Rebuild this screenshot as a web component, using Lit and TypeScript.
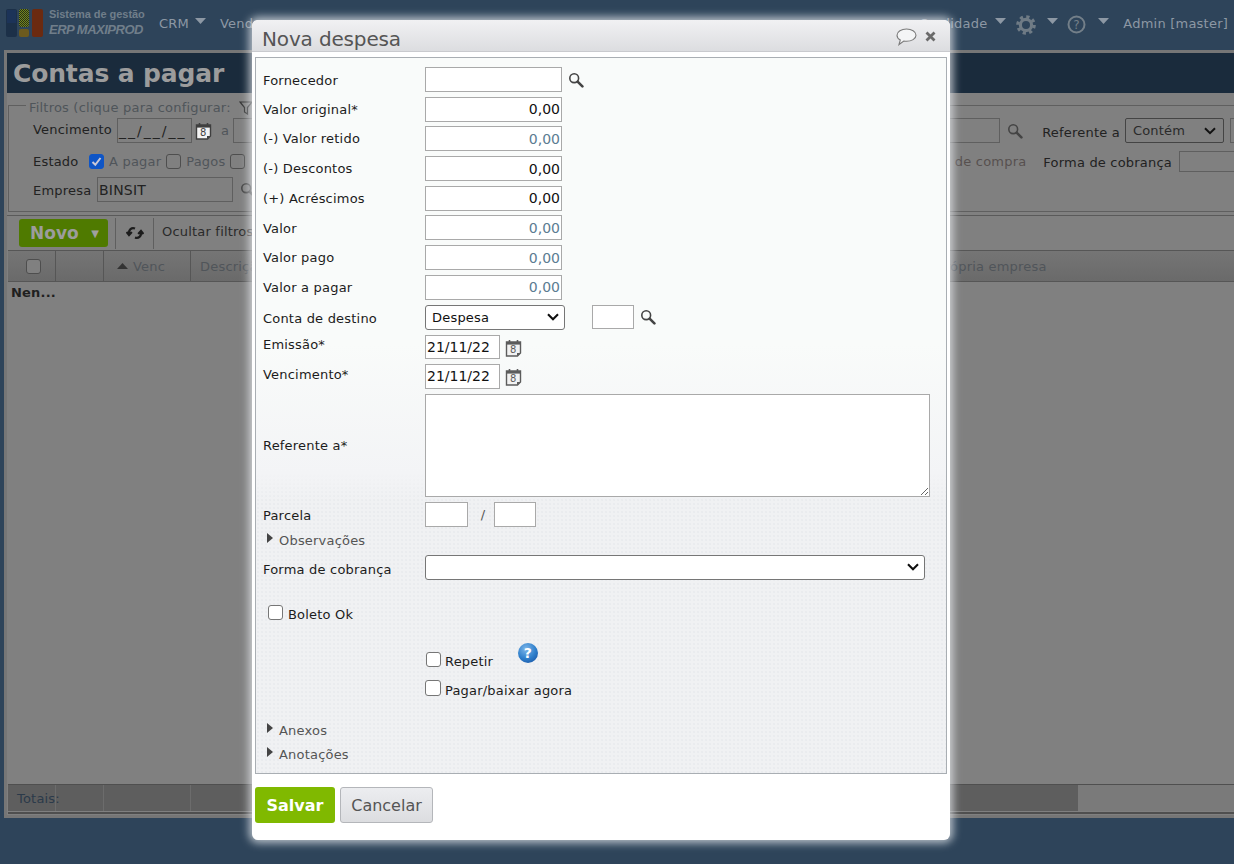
import { LitElement, html, css } from "lit";
import { customElement } from "lit/decorators.js";

const mag = html`<svg class="mag" viewBox="0 0 16 16" width="16" height="16"><circle cx="6.2" cy="6.2" r="4.4" fill="none" stroke="currentColor" stroke-width="1.6"/><path d="M9.6 9.6L14.4 14.4" stroke="currentColor" stroke-width="2.6" stroke-linecap="round"/></svg>`;
const cal = html`<svg class="cal" viewBox="0 0 17 18" width="17" height="18"><path d="M1.5 3h14v11l-3 3h-11z" fill="#f2f2f2" stroke="currentColor" stroke-width="1.4"/><path d="M1.5 3h14v2.6h-14z" fill="currentColor"/><path d="M4.5 1v3M12.5 1v3" stroke="currentColor" stroke-width="1.6"/><path d="M12 17v-3h3.5z" fill="currentColor"/><text x="8.3" y="14.4" text-anchor="middle" font-family="DejaVu Sans" font-size="10" fill="currentColor">8</text></svg>`;
const caret = html`<svg class="caret" viewBox="0 0 11 6" width="11" height="6"><path d="M0 0H11L5.500 6z" fill="currentColor"/></svg>`;
const side = html`<svg class="side" viewBox="0 0 6 10" width="6" height="10"><path d="M0 0L6 5L0 10z" fill="#444"/></svg>`;

@customElement("app-root")
export class AppRoot extends LitElement {
  static styles = css`
    :host { display: block; position: relative; width: 1234px; height: 864px; overflow: hidden; background: #2e445a; font-family: "DejaVu Sans", sans-serif; font-size: 13px; letter-spacing: .2px; color: #222; }
    * { box-sizing: border-box; }
    .top { height: 50px; display: flex; align-items: center; color: #8d98a4; white-space: nowrap; }
    .logo { margin: -4px 0 0 6px; flex: none; }
    .brand { margin-left: 5px; width: 110px; display: flex; flex-direction: column; color: #707e8a; margin-top: -6px; font-family: "Liberation Sans", sans-serif; letter-spacing: 0; }
    .brand b { font-size: 11px; line-height: 14px; font-weight: 700; letter-spacing: -.05px; }
    .brand i { font-size: 13px; line-height: 15px; font-weight: 700; font-style: italic; margin-top: 1px; letter-spacing: -.5px; }
    .menu { display: flex; align-items: center; margin-top: -4px; }
    .caret { color: #8d98a4; display: block; }
    .m-crm { width: 61px; gap: 6px; }
    .m-crm .caret { margin-bottom: 4px; }
    .right { margin-left: auto; display: flex; align-items: center; margin-top: -4px; padding-right: 6px; letter-spacing: .22px; }
    .right span.r { display: flex; margin-bottom: 4px; }
    .right svg.ico { margin-top: 3px; display: block; }
    .right .r1 { margin: 0 10px 0 8px; }
    .right .r2 { margin: 0 9px 0 11px; }
    .right .r3 { margin: 0 14px 0 12px; }
    .page { height: 768px; margin-left: 4px; border: solid #767676; border-width: 3px 0 3px 3px; background: #808080; display: flex; flex-direction: column; overflow: hidden; }
    .title { height: 40px; flex: none; background: #1a2b3c; color: #9c9c9c; font-size: 25px; font-weight: 700; line-height: 42px; padding-left: 6px; letter-spacing: -.15px; }
    fieldset { flex: none; margin: 2px -2px 0 1px; padding: 0; height: 117px; border: 1px solid #5f5f5f; min-width: 0; display: flex; flex-direction: column; }
    legend { margin-left: 17px; padding: 6px 3px 0; color: #4f555a; line-height: 14px; height: 20px; display: flex; align-items: center; gap: 8px; }
    .f { display: flex; align-items: center; padding-left: 24px; white-space: nowrap; }
    .f > * { flex: none; }
    .f > .rt { flex: 1; min-width: 0; }
    .f1 { height: 25px; margin-top: 3px; }
    .f2 { height: 22px; margin-top: 7px; }
    .f3 { height: 25px; margin-top: 5px; }
    .fi { height: 25px; border: 1px solid #5f5f5f; background: #808080; padding: 0 1px; font: 14px "DejaVu Sans", sans-serif; color: #222; display: flex; align-items: center; flex: none; }
    .l84 { width: 84px; margin-top: -3px; }
    .l56 { width: 56px; }
    .l64 { width: 64px; margin-top: 2px; }
    .w75 { width: 75px; letter-spacing: 2px; }
    .w767 { width: 767px; }
    .w136 { width: 136px; }
    .w10 { width: 10px; margin-left: 6px; }
    .w58 { width: 56px; height: 21px; margin-left: 7px; }
    .bgcal { margin-left: 3px; color: #3f3f3f; display: flex; }
    .bga { margin: 0 4px 0 9px; }
    .bgmag { margin-left: 7px; color: #333; display: flex; }
    .refa { margin-left: 19px; margin-top: 3px; }
    .muted { color: #50555a; }
    .compra { color: #57504f; }
    .forma { margin-left: 17px; margin-top: 2px; }
    .gap5 { margin: 0 5px; }
    .cb { width: 15px; height: 15px; border: 1px solid #4e4e4e; border-radius: 3px; background: #808080; flex: none; display: block; }
    .cb.on { background: #0e55c6; border-color: #0e55c6; }
    .cb.on svg { display: block; }
    .rt { display: flex; align-items: center; justify-content: flex-end; }
    .sel { width: 99px; height: 25px; border: 1px solid #444; border-radius: 2px; padding: 0 7px; display: flex; align-items: center; justify-content: space-between; margin-left: 5px; color: #2a2a2a; }
    .bar { height: 35px; flex: none; margin-top: 3px; border-top: 1px solid #5a5a5a; display: flex; align-items: center; white-space: nowrap; }
    .novo { margin-left: 12px; width: 89px; height: 28px; border-radius: 3px; background: #4f7a00; color: #9c9c9c; font-size: 17px; font-weight: 700; letter-spacing: 0; display: flex; align-items: center; justify-content: space-between; padding: 0 9px 0 11px; }
    .novo span { font-size: 10px; color: #a0a0a0; }
    .sep { width: 1px; height: 31px; background: #5f5f5f; flex: none; }
    .sep1 { margin-left: 7px; }
    .ref { margin: 0 9px 0 10px; flex: none; display: block; }
    .hide { margin: 0 0 3px 8px; color: #2a2a2a; }
    .th { height: 32px; flex: none; margin-left: 1px; border: solid #565656; border-width: 1px 0; background: linear-gradient(#757575, #6a6a6a); display: flex; color: #333; white-space: nowrap; }
    .c { border-right: 1px solid #565656; display: flex; align-items: center; flex: none; }
    .c1 { width: 48px; justify-content: center; padding-left: 3px; }
    .c2 { width: 48px; }
    .c3 { width: 87px; padding-left: 13px; gap: 5px; }
    .c4 { width: 746px; padding-left: 9px; border-right: 0; }
    .c5 { border: 0; }
    .c3 svg { color: #333; }
    .tb { flex: 1; margin-left: 1px; padding: 2px 0 0 3px; font-weight: 700; color: #1f1f1f; line-height: 17px; }
    .foot { height: 27px; flex: none; margin-left: 1px; border-top: 1px solid #4f4f4f; background: #7a7a7a; display: flex; }
    .fc { background: #5e5e5e; border-right: 1px solid #6c6c6c; flex: none; }
    .fc1 { width: 48px; padding: 6px 0 0 9px; color: #2b3a4a; line-height: 16px; white-space: nowrap; position: relative; z-index: 1; }
    .fc1b { width: 48px; }
    .fc2 { width: 87px; }
    .fc3 { width: 887px; border-right: 0; }
    .under { height: 3px; margin-left: 1px; border-top: 2px solid #4f4f4f; margin-top: 1px; flex: none; }

    .dlg { position: absolute; left: 252px; top: 20px; width: 698px; height: 820px; background: #fff; border-radius: 6px; box-shadow: 0 0 9px 3px rgba(232,236,240,.75); display: flex; flex-direction: column; }
    .dh { height: 32px; flex: none; border-radius: 6px 6px 0 0; background: linear-gradient(#f1f1f3, #dcdde0); border-bottom: 1px solid #c9cace; display: flex; align-items: center; padding: 7px 14px 0 10px; color: #555; font-size: 20px; letter-spacing: -.15px; }
    .dh .t { flex: 1; }
    .dh svg { display: block; margin-top: -5px; }
    .dh .x { margin-left: 8px; }
    .box { flex: none; width: 692px; height: 717px; margin: 5px 0 0 3px; border: 1px solid #a9aeb3; padding-top: 9px; display: flex; flex-direction: column; color: #1c1c1c;
      background: linear-gradient(#f9fbfa 0, #f9fbfa 40%, #f3f4f6 58%, rgba(240,241,243,0) 62%), radial-gradient(#e8eaed .6px, transparent 1px) 0 0/4px 4px, #f0f1f3; }
    .row { display: flex; align-items: center; padding-left: 7px; height: 25px; flex: none; }
    .row label { width: 162px; flex: none; white-space: nowrap; margin-top: 2px; }
    .row.v label { margin-top: 1px; }
    .row.v label.up { margin-top: 0; }
    input.i, textarea, select { font-family: "DejaVu Sans", sans-serif; color: #111; background-color: #fff; }
    input.i { height: 25px; border: 1px solid #a9a9a9; padding: 0 1px; font-size: 14px; outline: none; border-radius: 0; display: block; }
    .w138 { width: 137px; }
    .num { text-align: right; }
    .ro { color: #5b7c92 !important; }
    .v { margin-bottom: 4.7px; }
    .mag { color: #444; flex: none; display: block; }
    .row .mag { margin-left: 6px; }
    select { height: 25px; border: 1px solid #767676; border-radius: 3px; font-size: 13px; letter-spacing: .2px; padding: 0 6px; display: block; flex: none; appearance: none; -webkit-appearance: none;
      background-image: url("data:image/svg+xml,%3Csvg xmlns='http://www.w3.org/2000/svg' width='12' height='8'%3E%3Cpath d='M1 1.200L6 6.200L11 1.200' fill='none' stroke='%23111' stroke-width='2.100'/%3E%3C/svg%3E");
      background-repeat: no-repeat; background-position: right 5px center; }
    .sdest { width: 140px; }
    .row .w42 { width: 42px; margin-left: 27px; height: 24px; }
    .r-em { margin-top: 5px; height: 24px; align-items: flex-start; }
    .r-ve { margin-top: 5px; height: 25px; align-items: flex-start; }
    .r-em label { line-height: 16px; margin-top: 2px; }
    .r-ve label { line-height: 16px; margin-top: 3px; }
    .date { width: 75px; }
    .h24 { height: 24px !important; }
    .row .cal { margin-left: 5px; color: #5c5c5c; flex: none; margin-top: 4px; }
    .r-ta { margin-top: 5px; height: 103px; }
    .row.r-ta label { margin-top: 0; }
    textarea { width: 505px; height: 103px; border: 1px solid #a9a9a9; display: block; outline: none; flex: none; }
    .r-pa { margin-top: 5px; }
    .w43 { width: 43px; }
    .r-pa span { width: 26px; text-align: center; padding-left: 4px; color: #555; flex: none; }
    .r-pa .w42b { width: 42px; height: 25px; }
    .fold { height: 16px; flex: none; display: flex; align-items: center; padding-left: 11px; color: #555; gap: 6px; }
    .fold span { margin-top: 2px; }
    .side { display: block; margin-top: -3px; }
    .r-ob { margin-top: 5px; }
    .r-fo { margin-top: 7px; }
    .row.r-fo label { margin-top: 4px; }
    .sfo { width: 500px; }
    .ck { appearance: none; -webkit-appearance: none; margin: 0; width: 15px; height: 15px; border: 1px solid #767676; border-radius: 3px; background: #fff; flex: none; display: block; }
    .r-bo { height: 16px; flex: none; margin-top: 25px; padding-left: 12px; display: flex; align-items: center; gap: 5px; }
    .r-bo span { margin-top: 4px; }
    .r-re { height: 25px; flex: none; margin-top: 22px; padding-left: 170px; display: flex; align-items: flex-end; }
    .r-re .ck { margin-bottom: 1px; }
    .r-re span { margin-left: 4px; width: 73px; line-height: 16px; margin-bottom: -2px; }
    .r-re svg { align-self: flex-start; display: block; }
    .r-pg { height: 16px; flex: none; margin-top: 12px; padding-left: 169px; display: flex; align-items: center; gap: 4px; }
    .r-pg span { margin-top: 5px; }
    .r-pg .ck { width: 16px; height: 16px; }
    .r-an { margin-top: 26px; }
    .r-at { margin-top: 8px; }
    .btns { display: flex; gap: 5px; margin: 13px 0 0 3px; letter-spacing: 0; }
    .btns div { height: 36px; border-radius: 3px; display: flex; align-items: center; justify-content: center; font-size: 16px; }
    .sv { width: 80px; background: #80b900; color: #fff; font-weight: 700; }
    .cn { width: 93px; background: linear-gradient(#ecedf0, #dcdde0); border: 1px solid #b4b6ba; color: #555; }
  `;

  render() {
    return html`
      <div class="top">
        <svg class="logo" width="38" height="28" viewBox="0 0 38 28">
          <defs>
            <pattern id="pa" width="2" height="2" patternUnits="userSpaceOnUse"><rect width="1" height="1" fill="#76861c"/><rect x="1" y="1" width="1" height="1" fill="#76861c"/><rect x="1" width="1" height="1" fill="#26301a"/><rect y="1" width="1" height="1" fill="#26301a"/></pattern>
          </defs>
          <rect x="0" y="0" width="11" height="28" rx="2" fill="#1c3048"/><rect x="1" y="1" width="9" height="13" fill="#1c3358"/>
          <rect x="13" y="0" width="10" height="18" rx="2" fill="url(#pa)"/>
          <rect x="13" y="20" width="10" height="8" rx="2" fill="#6c5a1e"/>
          <rect x="26" y="0" width="11" height="28" rx="2" fill="#6b2a10"/>
        </svg>
        <div class="brand"><b>Sistema de gestão</b><i>ERP MAXIPROD</i></div>
        <div class="menu m-crm"><span>CRM</span>${caret}</div>
        <div class="menu"><span>Vendas</span></div>
        <div class="right">
          <span>Qualidade</span><span class="r r1">${caret}</span>
          <svg class="ico" width="20" height="20" viewBox="0 0 20 20"><circle cx="10" cy="10" r="5.6" fill="none" stroke="#6f7b85" stroke-width="3.2"/><circle cx="10" cy="10" r="8.2" fill="none" stroke="#6f7b85" stroke-width="3.2" stroke-dasharray="3.2 3.24"/></svg>
          <span class="r r2">${caret}</span>
          <svg class="ico" width="19" height="19" viewBox="0 0 19 19"><circle cx="9.5" cy="9.5" r="8" fill="none" stroke="#737f89" stroke-width="2"/><text x="9.5" y="14" text-anchor="middle" font-family="DejaVu Sans" font-size="12" fill="#737f89">?</text></svg>
          <span class="r r3">${caret}</span>
          <span>Admin [master]</span>
        </div>
      </div>
      <div class="page">
        <div class="title">Contas a pagar</div>
        <fieldset>
          <legend>Filtros (clique para configurar:
            <svg width="14" height="14" viewBox="0 0 14 14"><path d="M1 1h12L8.500 6.500V13L5.500 11V6.500z" fill="none" stroke="#333" stroke-width="1.200"/></svg>
          </legend>
          <div class="f f1">
            <span class="l84">Vencimento</span><div class="fi w75">__/__/__</div>
            <span class="bgcal">${cal}</span>
            <span class="muted bga">a</span><div class="fi w767"></div>
            <span class="bgmag">${mag}</span>
            <span class="refa">Referente a</span>
            <div class="sel">Contém <svg width="12" height="8" viewBox="0 0 12 8"><path d="M1 1.200L6 6.200L11 1.200" fill="none" stroke="#111" stroke-width="2"/></svg></div>
            <div class="fi w10"></div>
          </div>
          <div class="f f2">
            <span class="l56">Estado</span>
            <span class="cb on"><svg width="13" height="13" viewBox="0 0 13 13"><path d="M2.500 7L5.300 9.800L10.500 3" fill="none" stroke="#c8c8d8" stroke-width="2"/></svg></span>
            <span class="muted gap5">A pagar</span>
            <span class="cb"></span><span class="muted gap5">Pagos</span>
            <span class="cb"></span>
            <span class="rt">
              <span class="compra">de compra</span>
              <span class="forma">Forma de cobrança</span>
              <div class="fi w58"></div>
            </span>
          </div>
          <div class="f f3">
            <span class="l64">Empresa</span>
            <div class="fi w136">BINSIT</div>
            <span class="bgmag">${mag}</span>
          </div>
        </fieldset>
        <div class="bar">
          <div class="novo">Novo <span>▼</span></div>
          <div class="sep sep1"></div>
          <svg class="ref" width="18" height="16" viewBox="0 0 18 16"><path d="M9 3.500C5.500 2 2.500 5 3 8.500M0.500 7l2.500 3L5.800 7" fill="none" stroke="#1c1c1c" stroke-width="2.200"/><path d="M9 12.500c3.500 1.500 6.500-1.500 6-5M17.500 9l-2.500-3L12.200 9" fill="none" stroke="#1c1c1c" stroke-width="2.200"/></svg>
          <div class="sep"></div>
          <span class="hide">Ocultar filtros</span>
        </div>
        <div class="th">
          <div class="c c1"><span class="cb"></span></div>
          <div class="c c2"></div>
          <div class="c c3"><svg width="11" height="6" viewBox="0 0 11 6"><path d="M0 6H11L5.500 0z" fill="currentColor"/></svg><span class="muted">Venc</span></div>
          <div class="c c4"><span class="muted">Descrição</span></div>
          <div class="c c5"><span class="muted">Própria empresa</span></div>
        </div>
        <div class="tb">Nen...</div>
        <div class="foot">
          <div class="fc fc1">Totais:</div>
          <div class="fc fc1b"></div>
          <div class="fc fc2"></div>
          <div class="fc fc3"></div>
        </div>
        <div class="under"></div>
      </div>

      <div class="dlg">
        <div class="dh">
          <span class="t">Nova despesa</span>
          <svg width="21" height="18" viewBox="0 0 21 18"><path d="M10.500 1C5.500 1 1 3.500 1 7.200c0 2 1.300 3.700 3.300 4.800L3 16.500 7.800 13c.9.200 1.800.300 2.700.300 5 0 9.500-2.500 9.500-6.100S15.500 1 10.500 1z" fill="#f4f5f6" stroke="#7a7a7a" stroke-width="1.100"/></svg>
          <svg class="x" width="11" height="11" viewBox="0 0 11 11"><path d="M1.500 1.500L9.500 9.500M9.500 1.500L1.500 9.500" stroke="#6a6a6a" stroke-width="2.800"/></svg>
        </div>
        <div class="box">
          <div class="row v"><label>Fornecedor</label><input class="i w138" />${mag}</div>
          <div class="row v"><label>Valor original*</label><input class="i w138 num" .value=${"0,00"} /></div>
          <div class="row v"><label class="up">(-) Valor retido</label><input class="i w138 num ro" .value=${"0,00"} /></div>
          <div class="row v"><label class="up">(-) Descontos</label><input class="i w138 num" .value=${"0,00"} /></div>
          <div class="row v"><label>(+) Acréscimos</label><input class="i w138 num" .value=${"0,00"} /></div>
          <div class="row v"><label>Valor</label><input class="i w138 num ro" .value=${"0,00"} /></div>
          <div class="row v"><label class="up">Valor pago</label><input class="i w138 num ro" .value=${"0,00"} /></div>
          <div class="row v"><label>Valor a pagar</label><input class="i w138 num ro" .value=${"0,00"} /></div>
          <div class="row"><label>Conta de destino</label><select class="sdest"><option>Despesa</option></select><input class="i w42" />${mag}</div>
          <div class="row r-em"><label>Emissão*</label><input class="i date h24" .value=${"21/11/22"} />${cal}</div>
          <div class="row r-ve"><label>Vencimento*</label><input class="i date" .value=${"21/11/22"} />${cal}</div>
          <div class="row r-ta"><label>Referente a*</label><textarea></textarea></div>
          <div class="row r-pa"><label>Parcela</label><input class="i w43" /><span>/</span><input class="i w42b" /></div>
          <div class="fold r-ob">${side}<span>Observações</span></div>
          <div class="row r-fo"><label>Forma de cobrança</label><select class="sfo"><option></option></select></div>
          <div class="r-bo"><input type="checkbox" class="ck" /><span>Boleto Ok</span></div>
          <div class="r-re"><input type="checkbox" class="ck" /><span>Repetir</span>
            <svg width="20" height="20" viewBox="0 0 20 20"><defs><radialGradient id="hb" cx=".4" cy=".3" r=".8"><stop offset="0" stop-color="#7fb7ea"/><stop offset=".6" stop-color="#2f7fcb"/><stop offset="1" stop-color="#1b58a8"/></radialGradient></defs><circle cx="10" cy="10" r="10" fill="url(#hb)"/><text x="10" y="15" text-anchor="middle" font-family="DejaVu Sans" font-weight="700" font-size="14" fill="#fff">?</text></svg>
          </div>
          <div class="r-pg"><input type="checkbox" class="ck" /><span>Pagar/baixar agora</span></div>
          <div class="fold r-an">${side}<span>Anexos</span></div>
          <div class="fold r-at">${side}<span>Anotações</span></div>
        </div>
        <div class="btns"><div class="sv">Salvar</div><div class="cn">Cancelar</div></div>
      </div>
    `;
  }
}
